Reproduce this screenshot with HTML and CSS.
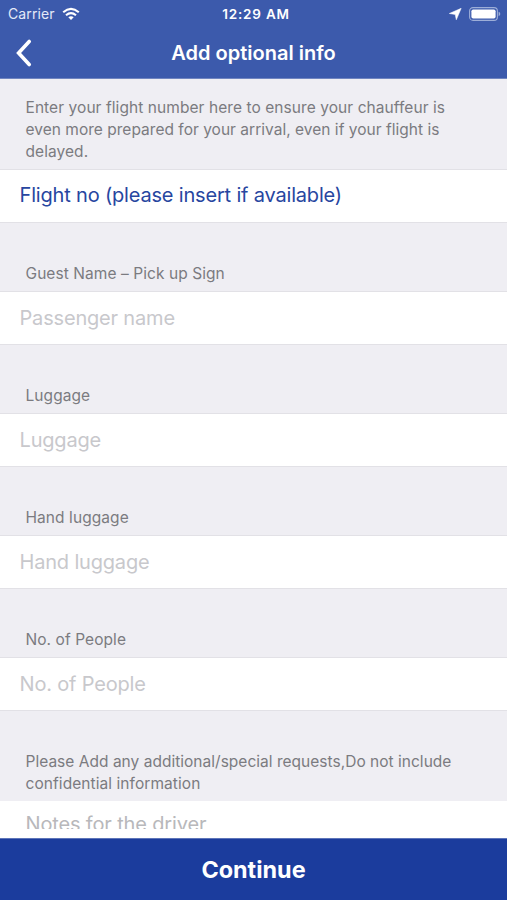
FILE: index.html
```html
<!DOCTYPE html>
<html lang="en">
<head>
<meta charset="utf-8">
<title>Add optional info</title>
<link rel="stylesheet" href="styles.css">
</head>
<body>
<div class="screen">
  <header class="header">
    <div class="status">
      <div class="status-left">
        <span class="carrier">Carrier</span>
        <svg class="wifi" width="18" height="14" viewBox="0 0 18 14" fill="none" stroke="#fff" stroke-width="2.1"><path d="M1.2 5.2Q9-1.6 16.8 5.2"/><path d="M4 8.2Q9 3.9 14 8.2"/><path d="M9 13L6.3 10.3Q9 8 11.7 10.3Z" fill="#fff" stroke="none"/></svg>
      </div>
      <span class="clock">12:29 AM</span>
      <div class="status-right">
        <svg width="13" height="12" viewBox="0 0 13 12"><path d="M12.2.3L7.3 11.8L6.2 6.5L.3 5.5Z" fill="#fff" stroke="#fff" stroke-width=".5"/></svg>
        <svg width="32" height="14" viewBox="0 0 32 14"><rect x=".6" y=".6" width="27.8" height="12.8" rx="3.4" fill="none" stroke="#9daed8" stroke-width="1.1"/><rect x="2.4" y="2.4" width="24.2" height="9.2" rx="1.8" fill="#fff"/><path d="M29.6 4.8Q31.3 5.4 31.3 7T29.6 9.2Z" fill="#9daed8"/></svg>
      </div>
    </div>
    <div class="nav">
      <svg class="back" width="18" height="28" viewBox="0 0 18 28"><path d="M14.2 2.5L3.6 14L14.2 25.5" fill="none" stroke="#fff" stroke-width="3.6" stroke-linecap="round" stroke-linejoin="miter"/></svg>
      <h1 class="title">Add optional info</h1>
    </div>
  </header>
  <main class="form">
    <p class="label label-first">Enter your flight number here to ensure your chauffeur is<br><span class="tight">even more prepared for your arrival, even if your flight is</span><br>delayed.</p>
    <div class="field filled">Flight no (please insert if available)</div>
    <p class="label">Guest Name – Pick up Sign</p>
    <div class="field">Passenger name</div>
    <p class="label">Luggage</p>
    <div class="field">Luggage</div>
    <p class="label">Hand luggage</p>
    <div class="field">Hand luggage</div>
    <p class="label">No. of People</p>
    <div class="field">No. of People</div>
    <p class="label"><span class="tight">Please Add any additional/special requests,Do not include</span><br>confidential information</p>
    <div class="notes"><div class="notes-text">Notes for the driver</div></div>
  </main>
  <footer class="continue">Continue</footer>
</div>
</body>
</html>
```
FILE: styles.css
```css
* { box-sizing: border-box; }
body { margin: 0; font-family: Inter, "Liberation Sans", sans-serif; }
.screen { width: 507px; height: 900px; display: flex; flex-direction: column; overflow: hidden; background: #efeef3; }
.header { height: 79px; flex: none; background: #3c5aac; border-bottom: 1px solid #7085c0; color: #fff; }
.status { height: 27px; display: grid; grid-template-columns: 1fr auto 1fr; align-items: center; padding: 0 6px 0 8px; }
.status-left { display: flex; align-items: center; gap: 7px; }
.carrier { font-size: 14px; letter-spacing: .1px; color: #e4e9f8; }
.clock { font-size: 13.5px; font-weight: 600; letter-spacing: .8px; margin-left: 3px; }
.status-right { display: flex; align-items: center; justify-content: flex-end; gap: 7px; }
.nav { height: 51px; display: grid; grid-template-columns: 1fr auto 1fr; align-items: center; }
.back { margin-left: 15px; }
.title { margin: 0; font-size: 20px; font-weight: 600; letter-spacing: 0; }
.form { flex: 1; min-height: 0; }
.label { margin: 0; padding: 40px 0 6px 25.5px; font-size: 15.5px; line-height: 22px; letter-spacing: .07px; color: #7b7b80; white-space: nowrap; }
.label-first { padding-top: 18px; }
.tight { letter-spacing: .02px; }
.field { height: 54px; padding-left: 19.5px; background: #fff; border-top: 1px solid #e2e1e6; border-bottom: 1px solid #e2e1e6; font-size: 20px; line-height: 52px; letter-spacing: -.18px; color: #c8c8cc; white-space: nowrap; }
.filled { line-height: 51px; color: #2746a0; }
.notes { height: 37px; padding: 10px 0 0 25.5px; background: #fff; }
.notes-text { height: 18px; overflow: hidden; font-size: 20px; line-height: 26px; letter-spacing: -.15px; color: #b8b8bb; white-space: nowrap; }
.continue { height: 62px; flex: none; display: flex; align-items: center; justify-content: center; background: #1b3c9d; border-top: 1px solid #5d75b9; color: #fff; font-size: 23.4px; font-weight: 700; }
```
